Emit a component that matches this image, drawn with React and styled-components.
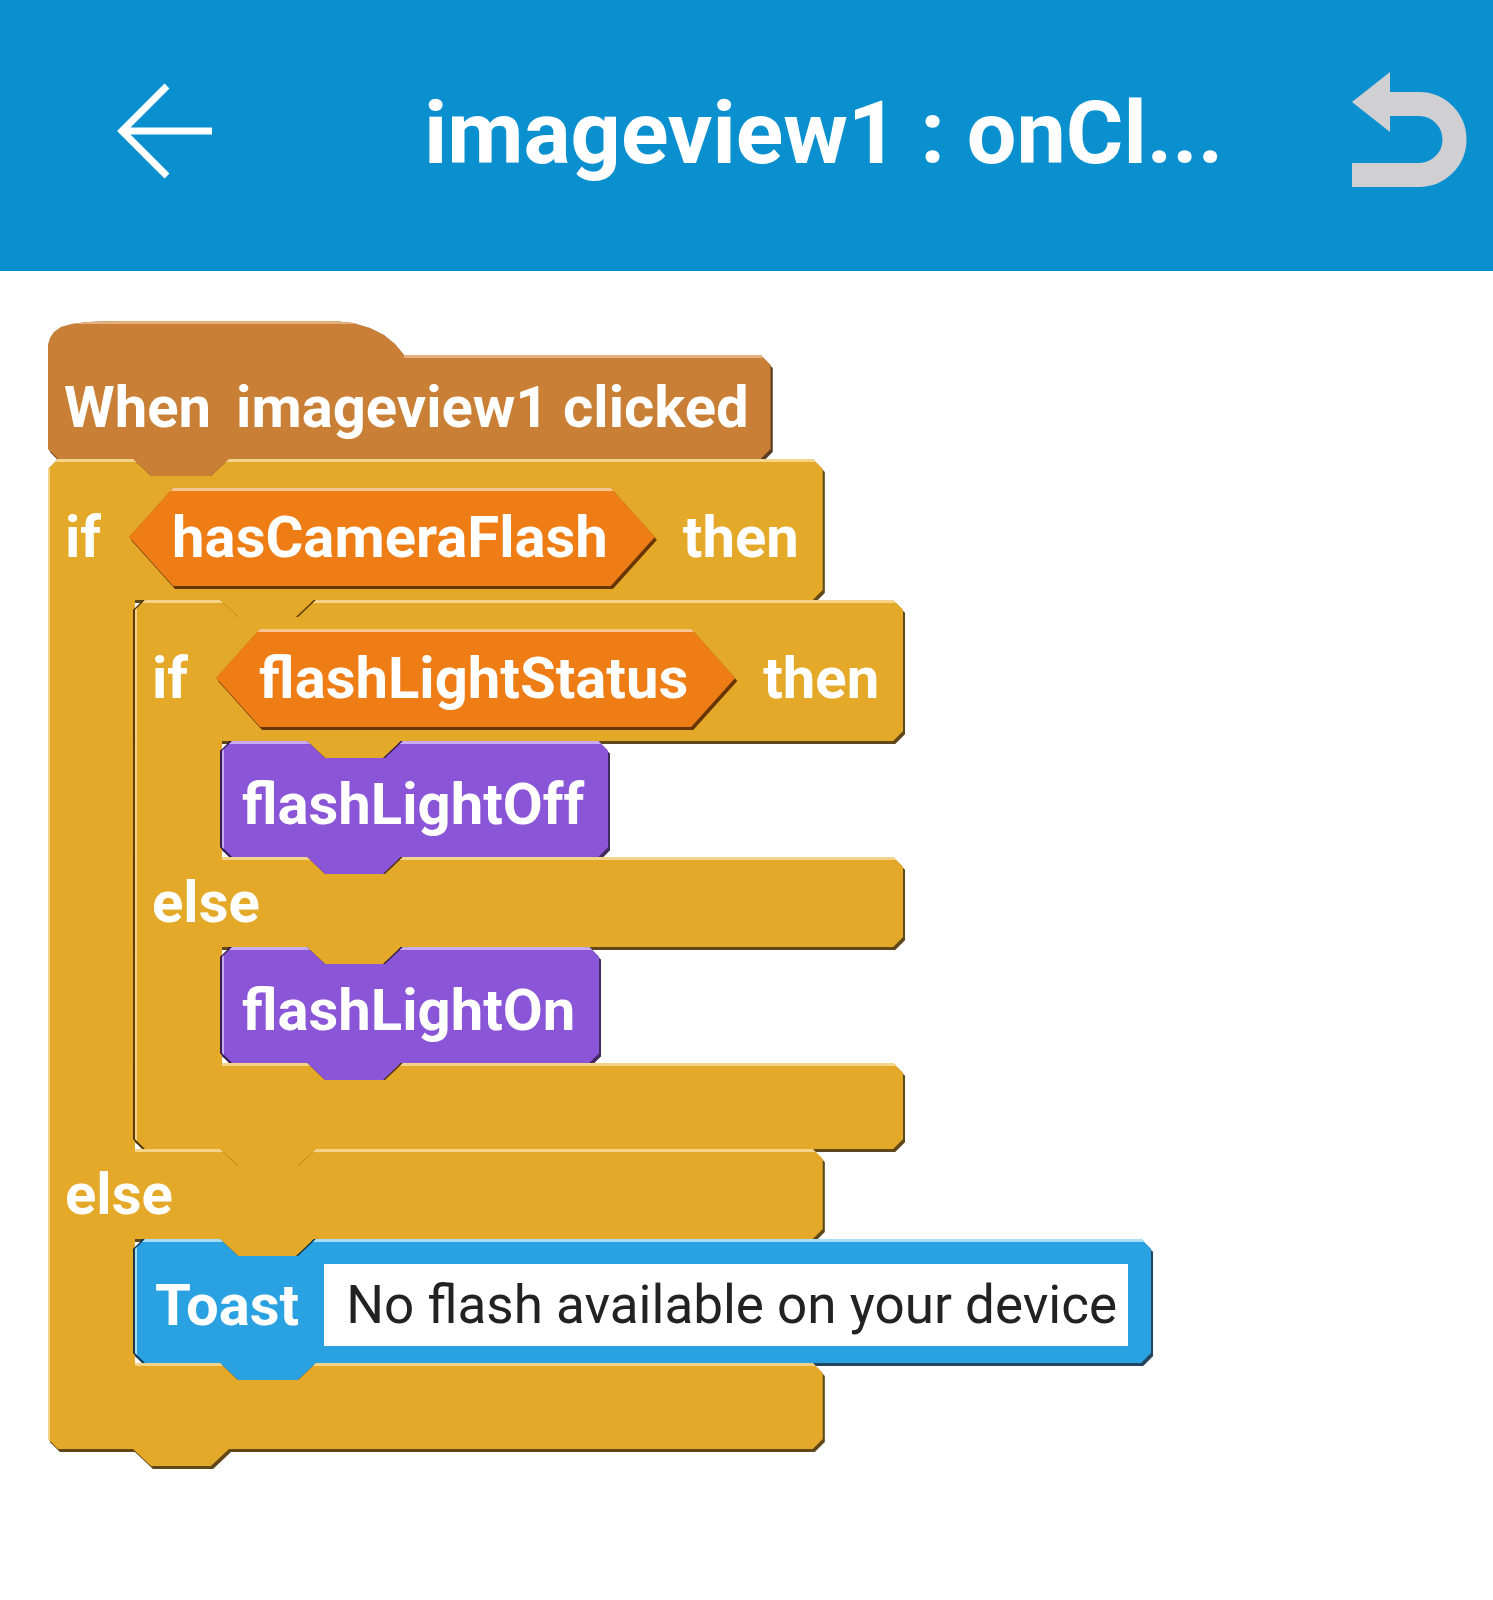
import React from "react";
import styled, { createGlobalStyle } from "styled-components";

const GlobalStyle = createGlobalStyle`
  html, body {
    margin: 0;
    padding: 0;
    background: #fff;
  }
  body {
    font-family: Roboto, "Noto Sans", "Liberation Sans", sans-serif;
  }
`;

// block geometry (px)
const NOTCH = 85;
const TAB_D = 17;
const TAB_W = 96;
const SLANT = 18;
const CUT = 10;
const ARM = 87;
const DOME = 34;
const POINT = 44;

const palette = {
  event: { fill: "#c98036", light: "#e4b07e", dark: "rgba(70, 38, 8, 0.9)" },
  control: { fill: "#e5a92a", light: "#f5d48a", dark: "rgba(80, 52, 0, 0.9)" },
  bool: { fill: "#ee7d16", light: "#f8c590", dark: "rgba(90, 40, 0, 0.9)" },
  custom: { fill: "#8b55d7", light: "#c7aaf2", dark: "rgba(45, 20, 80, 0.9)" },
  view: { fill: "#2aa2e1", light: "#a9dcf6", dark: "rgba(10, 50, 80, 0.9)" },
};

const DOME_POINTS = [
  [0, 24], [2, 17], [6, 11], [13, 6], [24, 3], [40, 1], [74, 0],
  [285, 0], [305, 2], [322, 7], [336, 14], [347, 23], [356, DOME],
];

const fromEnd = v => `calc(100% - ${v}px)`;

const blockClip = ({ notch, tab, topLeft = "cut", bottomLeft = "cut", top = 0, dome = false }) => {
    const pts = [];

    if (dome) DOME_POINTS.forEach(([x, y]) => pts.push(`${x}px ${y}px`));
    else if (topLeft === "cut") pts.push(`0 ${top + CUT}px`, `${CUT}px ${top}px`);
    else pts.push(`0 ${top}px`);

    if (notch != null) {
        pts.push(
            `${notch}px ${top}px`,
            `${notch + SLANT}px ${top + TAB_D}px`,
            `${notch + TAB_W - SLANT}px ${top + TAB_D}px`,
            `${notch + TAB_W}px ${top}px`
        );
    }

    pts.push(`${fromEnd(CUT)} ${top}px`, `100% ${top + CUT}px`);
    pts.push(`100% ${fromEnd(TAB_D + CUT)}`, `${fromEnd(CUT)} ${fromEnd(TAB_D)}`);

    if (tab != null) {
        pts.push(
            `${tab + TAB_W}px ${fromEnd(TAB_D)}`,
            `${tab + TAB_W - SLANT}px 100%`,
            `${tab + SLANT}px 100%`,
            `${tab}px ${fromEnd(TAB_D)}`
        );
    }

    if (bottomLeft === "cut") pts.push(`${CUT}px ${fromEnd(TAB_D)}`, `0 ${fromEnd(TAB_D + CUT)}`);
    else pts.push(`0 ${fromEnd(TAB_D)}`);

    return `polygon(${pts.join(", ")})`;
};

const clips = {
    hat: blockClip({ dome: true, top: DOME, tab: NOTCH }),
    stack: blockClip({ notch: NOTCH, tab: NOTCH }),
    header: blockClip({ notch: NOTCH, tab: ARM + NOTCH, bottomLeft: "square" }),
    else: blockClip({ notch: ARM + NOTCH, tab: ARM + NOTCH, topLeft: "square", bottomLeft: "square" }),
    footer: blockClip({ notch: ARM + NOTCH, tab: NOTCH, topLeft: "square" }),
    hex: `polygon(0 50%, ${POINT}px 0, ${fromEnd(POINT)} 0, 100% 50%, ${fromEnd(POINT)} 100%, ${POINT}px 100%)`,
};

const ShapeLayer = styled.div`
    position: absolute;
    top: 0;
    left: 0;
    right: 0;
    bottom: ${p => (p.$tail ? -TAB_D : 0)}px;
    filter: ${p => (p.$nested ? `drop-shadow(-2px 0 0 ${p.$tone.dark}) ` : "")}drop-shadow(0 0 0.7px rgba(0, 0, 0, 0.35)) drop-shadow(2px 3px 0 ${p => p.$tone.dark});
    pointer-events: none;
`;

const Fill = styled.div`
    width: 100%;
    height: 100%;
    clip-path: ${p => p.$clip};
    background: ${p => p.$bg};
`;

// highlights: [x, y, w, h] strips of the light tone laid over the fill
const Shape = ({ tone, clip, highlights = [[0, 0]], edge = true, tail = true, nested = false }) => {
    const strips = highlights.map(([x, y]) => [x, y, "100%", "3px"]);
    if (edge) strips.push([0, 0, "2px", "100%"]);
    const lines = strips.map(
        ([x, y, w, h]) => `linear-gradient(${tone.light}, ${tone.light}) ${x}px ${y}px / ${w} ${h} no-repeat`
    );
    return (
        <ShapeLayer $tone={tone} $tail={tail} $nested={nested}>
            <Fill $clip={clip} $bg={[...lines, tone.fill].join(", ")} />
        </ShapeLayer>
    );
};

const AppBar = styled.header`
    display: flex;
    align-items: center;
    height: 271px;
    padding: 0 26px 0 117px;
    box-sizing: border-box;
    background: #0a8fcf;
`;

const IconBox = styled.div`
    display: flex;
    flex-shrink: 0;
    margin-bottom: ${p => p.$lift}px;
`;

const Title = styled.h1`
    flex: 1;
    margin: 0 0 6px 211px;
    color: #fff;
    font-size: 88px;
    font-weight: 700;
    line-height: 1;
    white-space: nowrap;
`;

const Canvas = styled.main`
    padding: 50px 0 80px 48px;
`;

const Script = styled.div`
    display: flex;
    flex-direction: column;
    align-items: flex-start;
`;

const Label = styled.span`
    position: relative;
    color: #fff;
    font-size: 58px;
    font-weight: 700;
    line-height: 70px;
    white-space: nowrap;
`;

const HatBlock = styled.div`
    position: relative;
    display: flex;
    align-items: center;
    gap: 25px;
    width: max-content;
    padding: ${DOME + 17}px 22px 17px 16px;
`;

const StackBlock = styled.div`
    position: relative;
    display: flex;
    align-items: center;
    gap: 25px;
    width: max-content;
    padding: ${p => (p.$tall ? "25px 23px 17px 20px" : "28px 24px 18px 20px")};
`;

const TextInput = styled.div`
    position: relative;
    display: flex;
    align-items: center;
    height: 82px;
    padding: 0 11px 0 22px;
    background: #fff;
    color: #222;
    font-size: 53px;
    font-weight: 400;
    white-space: nowrap;
`;

const CBlock = styled.div`
    display: flex;
    flex-direction: column;
    width: max-content;
`;

const CHeader = styled.div`
    position: relative;
    display: flex;
    align-items: center;
    gap: 28px;
    padding: 29px 24px 14px 17px;
`;

const Condition = styled.div`
    position: relative;
    display: flex;
    align-items: center;
    padding: 14px 47px 14px 43px;
`;

const CBody = styled.div`
    display: flex;
`;

const Arm = styled.div`
    position: relative;
    flex: none;
    width: ${ARM}px;
    background: ${palette.control.fill};
    box-shadow: inset 2px 0 0 ${palette.control.light}
        ${p => (p.$nested ? `, -2px 0 0 ${palette.control.dark}` : "")};
`;

const Substack = styled.div`
    flex: none;
    width: 0;
    display: flex;
    flex-direction: column;
    align-items: flex-start;
`;

const CBar = styled.div`
    position: relative;
    display: flex;
    align-items: center;
    height: ${p => p.$h}px;
    padding-left: 17px;
`;

const BackIcon = () => (
    <svg width="96" height="96" viewBox="0 0 96 96" fill="none" stroke="#fff" strokeWidth="7">
        <path d="M50 3 L5 48 L50 93 M5 48 H95" />
    </svg>
);

const UndoIcon = () => (
    <svg width="115" height="117" viewBox="0 0 115 117">
        <path d="M36 32 H67 A35.5 35.5 0 0 1 67 103 H0" fill="none" stroke="#d0d0d3" strokeWidth="24" />
        <path d="M0 30 L38 0 L38 60 Z" fill="#d0d0d3" />
    </svg>
);

const MethodBlock = ({ children }) => (
    <StackBlock>
        <Shape tone={palette.custom} clip={clips.stack} nested />
        <Label>{children}</Label>
    </StackBlock>
);

const ToastBlock = ({ message }) => (
    <StackBlock $tall>
        <Shape tone={palette.view} clip={clips.stack} nested />
        <Label>Toast</Label>
        <TextInput>{message}</TextInput>
    </StackBlock>
);

const IfElse = ({ condition, then, otherwise, nested = false }) => (
    <CBlock>
        <CHeader>
            <Shape tone={palette.control} clip={clips.header} nested={nested} />
            <Label>if</Label>
            <Condition>
                <Shape tone={palette.bool} clip={clips.hex} tail={false} edge={false} />
                <Label>{condition}</Label>
            </Condition>
            <Label>then</Label>
        </CHeader>
        <CBody>
            <Arm $nested={nested} />
            <Substack>{then}</Substack>
        </CBody>
        <CBar $h={90}>
            <Shape tone={palette.control} clip={clips.else} highlights={[[ARM, 0]]} nested={nested} />
            <Label>else</Label>
        </CBar>
        <CBody>
            <Arm $nested={nested} />
            <Substack>{otherwise}</Substack>
        </CBody>
        <CBar $h={86}>
            <Shape tone={palette.control} clip={clips.footer} highlights={[[ARM, 0]]} nested={nested} />
        </CBar>
    </CBlock>
);

const App = () => {
    return (
        <>
            <GlobalStyle />
            <AppBar>
                <IconBox $lift={9}>
                    <BackIcon />
                </IconBox>
                <Title>imageview1 : onCl...</Title>
                <IconBox $lift={10}>
                    <UndoIcon />
                </IconBox>
            </AppBar>

            <Canvas>
                <Script>
                    <HatBlock>
                        <Shape tone={palette.event} clip={clips.hat} highlights={[[0, 0], [356, DOME]]} edge={false} />
                        <Label>When</Label>
                        <Label>imageview1 clicked</Label>
                    </HatBlock>

                    <IfElse
                        condition="hasCameraFlash"
                        then={
                            <IfElse
                                nested
                                condition="flashLightStatus"
                                then={<MethodBlock>flashLightOff</MethodBlock>}
                                otherwise={<MethodBlock>flashLightOn</MethodBlock>}
                            />
                        }
                        otherwise={<ToastBlock message="No flash available on your device" />}
                    />
                </Script>
            </Canvas>
        </>
    );
};

export default App;
